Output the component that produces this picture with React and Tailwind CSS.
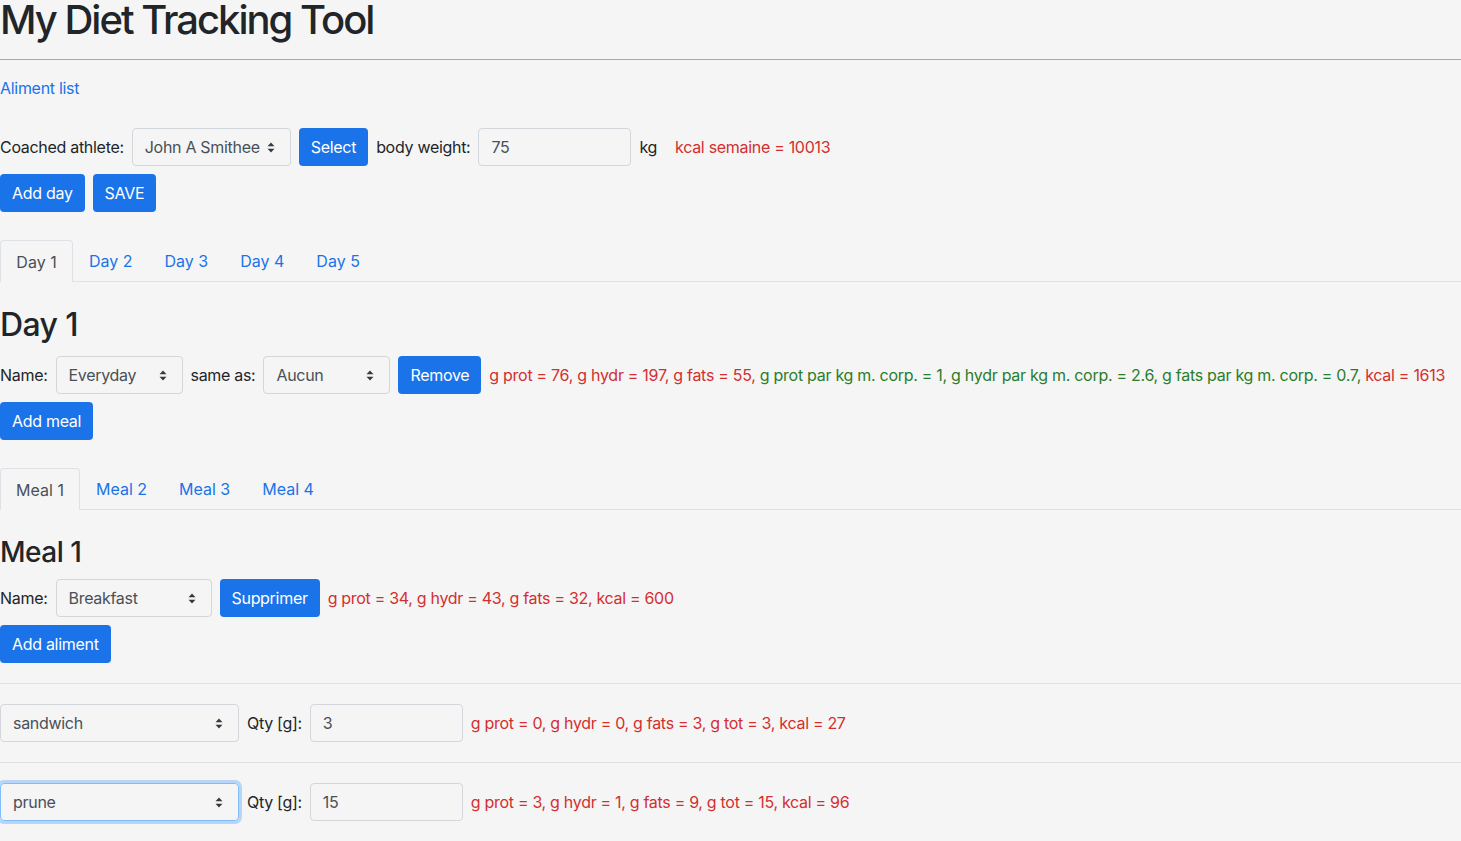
// App.jsx
const font = { fontFamily: 'Inter, "Noto Sans", sans-serif' };

function Arrows() {
  return (
    <svg width="8" height="11" viewBox="0 0 8 11" className="shrink-0">
      <path d="M4 0.5 L7.5 4.2 H0.5 Z" fill="#343a40" />
      <path d="M4 10.5 L7.5 6.8 H0.5 Z" fill="#343a40" />
    </svg>
  );
}

function Select({ value, w, focus }) {
  return (
    <div
      className={`${w} h-[38px] shrink-0 flex items-center justify-between pl-3 pr-[15px] rounded border text-[#495057] ${
        focus
          ? 'border-[#80bdff] shadow-[0_0_0_3px_rgba(0,123,255,0.25)]'
          : 'border-[#d3d6da]'
      }`}
    >
      <span>{value}</span>
      <Arrows />
    </div>
  );
}

function Input({ value }) {
  return (
    <div className="w-[153px] h-[38px] shrink-0 flex items-center px-3 rounded border border-[#d3d6da] text-[#495057]">
      {value}
    </div>
  );
}

function Btn({ children }) {
  return (
    <button className="h-[38px] shrink-0 px-3 rounded bg-[#1a73e8] text-white tracking-[-0.3px]">
      {children}
    </button>
  );
}

function Tabs({ items, w }) {
  return (
    <div className="flex border-b border-[#dee2e6] h-[42px] tracking-normal">
      {items.map((t, i) =>
        i === 0 ? (
          <div
            key={t}
            className={`${w} -mb-px h-[42px] flex items-center justify-center border border-b-0 border-[#dee2e6] rounded-t text-[#495057] bg-[#f5f5f5]`}
          >
            {t}
          </div>
        ) : (
          <div key={t} className="h-[41px] px-4 flex items-center text-[#1a73e8]">
            {t}
          </div>
        )
      )}
    </div>
  );
}

export default function App() {
  return (
    <div
      className="min-h-screen bg-[#f5f5f5] text-[#212529] text-base leading-6 tracking-[-0.3px] flow-root"
      style={font}
    >
      <h1 className="text-[40px] leading-[40px] font-medium tracking-[-2px]">My Diet Tracking Tool</h1>
      <div className="mt-[19px] h-px bg-[#7ab2e6]" />

      <div className="mt-4 text-[#1a73e8]">Aliment list</div>

      <div className="mt-7 flex items-center gap-2">
        <span>Coached athlete:</span>
        <Select value="John A Smithee" w="w-[159px]" />
        <Btn>Select</Btn>
        <span>body weight:</span>
        <Input value="75" />
        <span>kg</span>
        <span className="ml-[10px] text-[#d32f2f]">kcal semaine = 10013</span>
      </div>

      <div className="mt-2 flex gap-2">
        <Btn>Add day</Btn>
        <Btn>SAVE</Btn>
      </div>

      <div className="mt-7">
        <Tabs items={['Day 1', 'Day 2', 'Day 3', 'Day 4', 'Day 5']} w="w-[73px]" />
      </div>

      <h2 className="mt-6 text-[32px] leading-[38px] font-medium tracking-[-0.6px]">Day 1</h2>

      <div className="mt-3 flex items-center gap-2 whitespace-nowrap">
        <span>Name:</span>
        <Select value="Everyday" w="w-[127px]" />
        <span>same as:</span>
        <Select value="Aucun" w="w-[127px]" />
        <Btn>Remove</Btn>
        <span className="tracking-[-0.28px]">
          <span className="text-[#d32f2f]">g prot = 76, g hydr = 197, g fats = 55, </span>
          <span className="text-[#2a7d2a]">
            g prot par kg m. corp. = 1, g hydr par kg m. corp. = 2.6, g fats par kg m. corp. = 0.7,
          </span>
          <span className="text-[#d32f2f]"> kcal = 1613</span>
        </span>
      </div>

      <div className="mt-2 flex">
        <Btn>Add meal</Btn>
      </div>

      <div className="mt-7">
        <Tabs items={['Meal 1', 'Meal 2', 'Meal 3', 'Meal 4']} w="w-[80px]" />
      </div>

      <h3 className="mt-[25px] text-[28px] leading-[34px] font-medium tracking-[-0.5px]">Meal 1</h3>

      <div className="mt-[10px] flex items-center gap-2">
        <span>Name:</span>
        <Select value="Breakfast" w="w-[156px]" />
        <Btn>Supprimer</Btn>
        <span className="text-[#d32f2f]">g prot = 34, g hydr = 43, g fats = 32, kcal = 600</span>
      </div>

      <div className="mt-2 flex">
        <Btn>Add aliment</Btn>
      </div>

      <div className="mt-5 h-px bg-[#e1e1e1]" />
      <div className="mt-5 flex items-center gap-2">
        <Select value="sandwich" w="w-[239px]" />
        <span>Qty [g]:</span>
        <Input value="3" />
        <span className="text-[#d32f2f]">g prot = 0, g hydr = 0, g fats = 3, g tot = 3, kcal = 27</span>
      </div>

      <div className="mt-5 h-px bg-[#e1e1e1]" />
      <div className="mt-5 flex items-center gap-2">
        <Select value="prune" w="w-[239px]" focus />
        <span>Qty [g]:</span>
        <Input value="15" />
        <span className="text-[#d32f2f]">g prot = 3, g hydr = 1, g fats = 9, g tot = 15, kcal = 96</span>
      </div>
    </div>
  );
}
